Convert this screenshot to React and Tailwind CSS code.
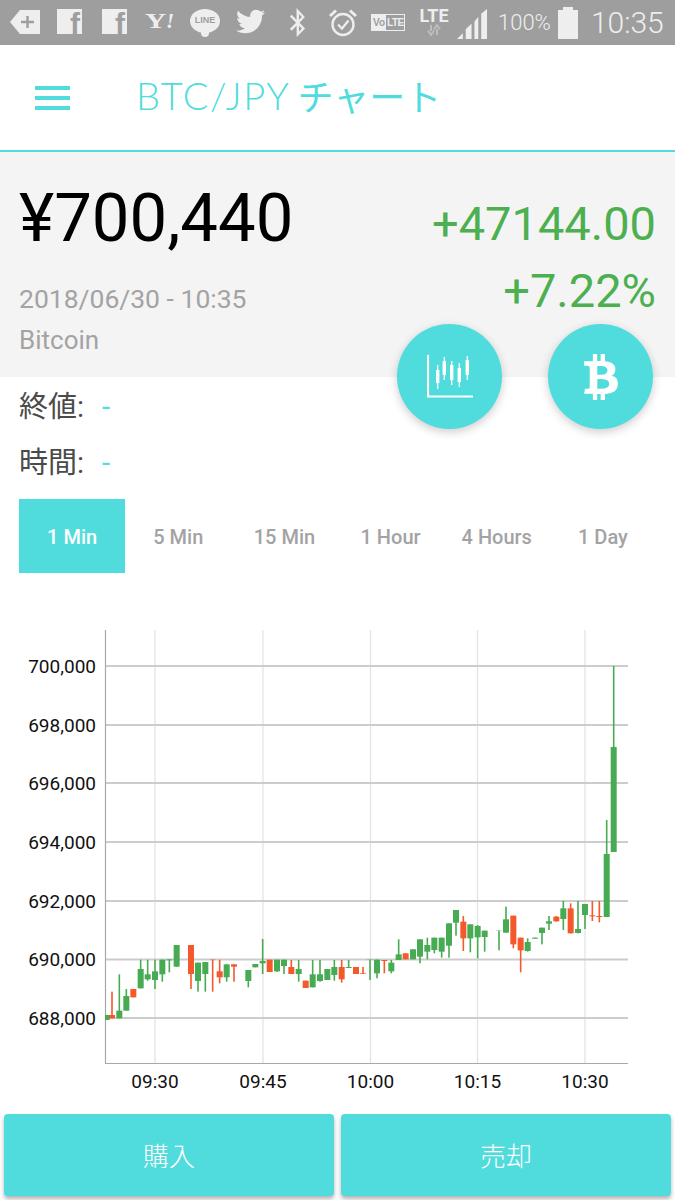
import React from "react";
import { FaTwitter, FaBtc, FaBluetoothB } from "react-icons/fa";

const prices = [
  ["700,000", 666],
  ["698,000", 725],
  ["696,000", 783],
  ["694,000", 842],
  ["692,000", 901],
  ["690,000", 959.5],
  ["688,000", 1018],
];
const times = [
  ["09:30", 155],
  ["09:45", 263],
  ["10:00", 370.5],
  ["10:15", 477.5],
  ["10:30", 585],
];
const tabs = ["1 Min", "5 Min", "15 Min", "1 Hour", "4 Hours", "1 Day"];

const G = "#46ab52";
const R = "#f4592b";

// x, wick top, wick bottom, body top, body bottom (screen px)
const candlesLeft = [
  [20, 375, 390, 375, 390, G], [36, 305, 385, 375, 385, R], [58, 253, 385, 362, 385, G],
  [79, 297, 362, 318, 362, G], [100, 297, 322, 297, 322, R], [122, 209, 295, 237, 295, G],
  [143, 209, 272, 253, 268, G], [165, 209, 297, 244, 270, G], [187, 209, 275, 209, 253, G],
  [208, 209, 247, 208, 211, G], [230, 165, 230, 165, 230, G], [273, 165, 297, 165, 252, R],
  [294, 218, 305, 218, 273, G], [316, 216, 305, 216, 252, G], [338, 209, 305, 209, 210, R],
  [359, 209, 280, 244, 262, R], [380, 223, 275, 223, 262, G], [402, 223, 275, 223, 230, R],
  [445, 240, 292, 240, 273, G], [466, 222, 232, 222, 232, G], [488, 147, 252, 213, 220, G],
  [509, 209, 246, 209, 246, R], [531, 209, 246, 209, 244, G], [552, 209, 252, 209, 228, G],
  [574, 210, 252, 231, 252, R], [596, 210, 275, 237, 252, G], [617, 272, 294, 272, 294, R],
  [638, 210, 292, 253, 292, G], [660, 210, 275, 253, 273, G], [682, 237, 270, 237, 270, G],
  [703, 210, 272, 231, 255, G], [725, 210, 278, 231, 268, R], [746, 210, 233, 231, 234, G],
  [768, 231, 252, 231, 252, R], [789, 231, 252, 250, 252, R],
].map(([x, a, b, c, d, col]) => [100 + x / 3, 890 + a / 3, 890 + b / 3, 890 + c / 3, 890 + d / 3, col]);

const candlesRight = [
  [0, 209, 270, 209, 210, G], [21, 209, 265, 209, 250, G], [43, 210, 250, 210, 213, R],
  [64, 210, 250, 218, 244, G], [86, 148, 210, 193, 210, G], [107, 190, 208, 190, 208, R],
  [129, 178, 208, 178, 208, G], [150, 148, 220, 148, 200, G], [172, 143, 208, 165, 185, G],
  [193, 143, 190, 143, 180, G], [215, 143, 203, 143, 185, G], [237, 100, 203, 100, 167, G],
  [258, 60, 137, 60, 98, G], [280, 78, 183, 95, 145, R], [301, 103, 187, 103, 145, G],
  [323, 105, 205, 108, 142, G], [344, 122, 185, 122, 141, G], [387, 122, 181, 122, 123, G],
  [408, 50, 128, 88, 128, G], [430, 77, 175, 77, 163, R], [452, 143, 247, 143, 181, R],
  [473, 145, 185, 156, 183, G], [495, 143, 146, 143, 146, G], [516, 113, 163, 113, 129, G],
  [537, 78, 120, 94, 101, G], [559, 78, 95, 80, 94, R], [580, 33, 120, 55, 87, G],
  [602, 40, 130, 55, 130, R], [624, 33, 130, 117, 129, G], [645, 42, 117, 42, 75, G],
  [667, 33, 93, 76, 79, R], [688, 33, 97, 78, 81, R],
].map(([x, a, b, c, d, col]) => [370 + x / 3, 890 + a / 3, 890 + b / 3, 890 + c / 3, 890 + d / 3, col]);

const candles = [
  ...candlesLeft,
  ...candlesRight,
  [606.7, 820, 917, 854, 917, G],
  [613.7, 666, 852, 747, 852, G],
];

const Chart = () => (
  <svg viewBox="0 600 675 510" className="w-[675px] h-[510px] mt-[27px] shrink-0">
    <clipPath id="plot">
      <rect x="105" y="630" width="523" height="433" />
    </clipPath>
    {times.map(([t, x]) => (
      <line key={t} x1={x} x2={x} y1={630} y2={1063} stroke="#e2e2e2" strokeWidth="1.2" />
    ))}
    {prices.map(([p, y]) => (
      <line key={p} x1={105} x2={628} y1={y} y2={y} stroke="#cccccc" strokeWidth="1.8" />
    ))}
    <path d="M105.5 630V1063.5H628" fill="none" stroke="#a8a8a8" strokeWidth="1.2" />
    {prices.map(([p, y]) => (
      <text key={p} x={96} y={y + 6.5} textAnchor="end" fontSize="19" fill="#111" fontFamily="Roboto, sans-serif">
        {p}
      </text>
    ))}
    {times.map(([t, x]) => (
      <text key={t} x={x} y={1088} textAnchor="middle" fontSize="19" fill="#111" fontFamily="Roboto, sans-serif">
        {t}
      </text>
    ))}
    <g clipPath="url(#plot)">
      {candles.map(([x, wt, wb, bt, bb, col], i) => (
        <g key={i} fill={col}>
          <rect x={x - 0.8} y={wt} width="1.6" height={wb - wt} />
          <rect x={x - 3} y={bt} width="6" height={bb - bt} />
        </g>
      ))}
    </g>
  </svg>
);

const FbIcon = ({ className }) => (
  <div className={`w-[25px] h-[25px] mb-[2px] bg-[#eeeeee] flex justify-end shrink-0 ${className}`}>
    <span className="text-[30px] leading-[25px] font-bold text-[#9e9e9e] pr-[2px] translate-y-[2px] font-['Liberation_Sans',sans-serif]">f</span>
  </div>
);

const StatusBar = () => (
  <div className="h-[45px] bg-[#9e9e9e] flex items-center shrink-0 text-[#eeeeee]">
    <svg width="30" height="24" viewBox="0 0 30 24" className="ml-[10px] mb-[2px] shrink-0">
      <path d="M10 0H30V24H10L0 12Z" fill="#eeeeee" />
      <path d="M11 12H24M17.5 6V18" stroke="#9e9e9e" strokeWidth="2.4" />
    </svg>
    <FbIcon className="ml-[17px]" />
    <FbIcon className="ml-[20px]" />
    <div className="ml-[18px] w-[30px] mb-[2px] shrink-0 flex items-baseline text-[21px] leading-none font-bold font-['Liberation_Serif',serif]">
      <span className="inline-block scale-x-[1.4] origin-left w-[21px]">Y</span>
      <span className="italic">!</span>
    </div>
    <div className="ml-[15px] w-[30px] h-[28px] relative shrink-0">
      <div className="w-[30px] h-[24px] rounded-[50%] bg-[#eeeeee] flex items-center justify-center">
        <span className="text-[9px] font-bold text-[#9e9e9e] font-['Liberation_Sans',sans-serif]">LINE</span>
      </div>
      <div className="absolute left-[11px] top-[22px] w-[8px] h-[6px] bg-[#eeeeee] rounded-b-[4px]" />
    </div>
    <FaTwitter className="ml-[16px] mb-[2px] shrink-0" size={29} color="#eeeeee" />
    <FaBluetoothB className="ml-[18px] mb-[1px] shrink-0" size={29} color="#eeeeee" />
    <svg width="30" height="30" viewBox="0 0 30 30" className="ml-[16px] shrink-0">
      <circle cx="15" cy="16.5" r="10.5" fill="none" stroke="#eeeeee" strokeWidth="2.4" />
      <path d="M10 16.5L14 20.5L20.5 12.5" fill="none" stroke="#eeeeee" strokeWidth="2.2" />
      <path d="M2 8L8 2.5M28 8L22 2.5" stroke="#eeeeee" strokeWidth="3" />
    </svg>
    <div className="ml-[13px] w-[34px] h-[17px] border border-[#eeeeee] flex items-center text-[10px] font-bold leading-none shrink-0 font-['Liberation_Sans',sans-serif]">
      <span className="bg-[#eeeeee] text-[#9e9e9e] h-full flex items-center px-[1px]">Vo</span>
      <span className="pl-[1px] tracking-[-0.5px]">LTE</span>
    </div>
    <div className="ml-[12px] w-[34px] flex flex-col items-center shrink-0 mb-[2px]">
      <span className="text-[18px] leading-[17px] font-bold font-['Roboto',sans-serif]">LTE</span>
      <svg width="16" height="12" viewBox="0 0 16 12">
        <path d="M5 1V7M2 6.5L5 11L8 6.5M11 11V5M8 5.5L11 1L14 5.5" fill="none" stroke="#bdbdbd" strokeWidth="2" />
      </svg>
    </div>
    <svg width="31" height="30" viewBox="0 0 32 31" className="ml-[6px] mt-[2px] shrink-0">
      <path d="M0 31L6 25V31ZM9 31V21L15 15V31ZM18 31V13L22 8V31ZM25 31V5L31 0V31Z" fill="#eeeeee" />
    </svg>
    <span className="ml-[10px] text-[22px] leading-none font-['Roboto',sans-serif] font-light shrink-0">100%</span>
    <div className="ml-[7px] w-[20px] h-[29px] mt-[3px] bg-[#eeeeee] relative shrink-0">
      <div className="absolute left-[5px] -top-[3px] w-[10px] h-[3px] bg-[#eeeeee]" />
    </div>
    <span className="ml-[13px] text-[30px] leading-none font-['Roboto',sans-serif] font-light shrink-0">10:35</span>
  </div>
);

const Info = ({ label }) => (
  <div className="h-[56px] flex items-center pl-[19px] text-[29px] text-[#4a4a4a] font-['Roboto','Noto_Sans_CJK_JP',sans-serif]">
    {label}:<span className="ml-[18px] text-[#50dcdc]">-</span>
  </div>
);

const App = () => {
  return (
    <div className="w-[675px] h-[1200px] bg-white flex flex-col relative overflow-hidden font-['Roboto','Noto_Sans_CJK_JP',sans-serif]">
      <StatusBar />

      <div className="h-[107px] border-b-2 border-[#50dcdc] flex items-center shrink-0">
        <div className="ml-[35px] w-[35px] flex flex-col gap-[6px]">
          <div className="h-[4px] bg-[#50dcdc]" />
          <div className="h-[4px] bg-[#50dcdc]" />
          <div className="h-[4px] bg-[#50dcdc]" />
        </div>
        <h1 className="ml-[66px] mb-[6px] leading-none text-[#50dcdc] flex items-center">
          <span className="text-[38px] font-light tracking-[1.6px] font-['Lato',sans-serif]">BTC/JPY</span>
          <span className="ml-[7px] text-[36px] font-normal font-['Noto_Sans_CJK_JP',sans-serif]">チャート</span>
        </h1>
      </div>

      <div className="h-[225px] bg-[#f4f4f4] flex justify-between px-[19px] shrink-0">
        <div>
          <div className="text-[67px] leading-none text-black mt-[33px]">¥700,440</div>
          <div className="text-[26.5px] leading-none text-[#a3a3a3] mt-[34px]">2018/06/30 - 10:35</div>
          <div className="text-[26px] leading-none text-[#a3a3a3] mt-[14px]">Bitcoin</div>
        </div>
        <div className="text-right text-[47px] leading-none text-[#4caf50]">
          <div className="mt-[48px]">+47144.00</div>
          <div className="mt-[20px]">+7.22%</div>
        </div>
      </div>

      <div className="absolute left-[397px] top-[324px] w-[105px] h-[105px] rounded-full bg-[#50dcdc] shadow-[0_3px_10px_rgba(0,0,0,0.2)] flex items-center justify-center">
        <svg width="46" height="43" viewBox="0 0 46 43">
          <path d="M1 0V41.5H46" fill="none" stroke="white" strokeWidth="2.2" />
          <path d="M10.7 10V34M17.3 2V25M24.7 6V30M32.3 8V32M40.3 1V25" stroke="white" strokeWidth="1.3" />
          <g fill="white">
            <rect x="9" y="15" width="3.4" height="13" />
            <rect x="15.6" y="6" width="3.4" height="14" />
            <rect x="23" y="10" width="3.4" height="15" />
            <rect x="30.6" y="13" width="3.4" height="14" />
            <rect x="38.6" y="5" width="3.4" height="15" />
          </g>
        </svg>
      </div>
      <div className="absolute left-[548px] top-[324px] w-[105px] h-[105px] rounded-full bg-[#50dcdc] shadow-[0_3px_10px_rgba(0,0,0,0.2)] flex items-center justify-center">
        <FaBtc size={46} color="white" />
      </div>

      <div className="mt-[3px]">
        <Info label="終値" />
        <Info label="時間" />
      </div>

      <div className="mx-[19px] mt-[7px] h-[74px] grid grid-cols-6 shrink-0">
        {tabs.map((t, i) => (
          <div
            key={t}
            className={
              i === 0
                ? "bg-[#50dcdc] text-white flex items-center justify-center pt-[2px] text-[20px] font-medium"
                : "text-[#a3a3a3] flex items-center justify-center pt-[2px] text-[20px] font-medium"
            }
          >
            {t}
          </div>
        ))}
      </div>

      <Chart />

      <div className="flex gap-[7px] px-[4px] mt-[4px] h-[82px] shrink-0">
        <button className="flex-1 rounded-[4px] bg-[#50dcdc] text-white text-[26px] font-light pt-[4px] shadow-[0_3px_4px_rgba(0,0,0,0.3)]">購入</button>
        <button className="flex-1 rounded-[4px] bg-[#50dcdc] text-white text-[26px] font-light pt-[4px] shadow-[0_3px_4px_rgba(0,0,0,0.3)]">売却</button>
      </div>
    </div>
  );
};

export default App;
